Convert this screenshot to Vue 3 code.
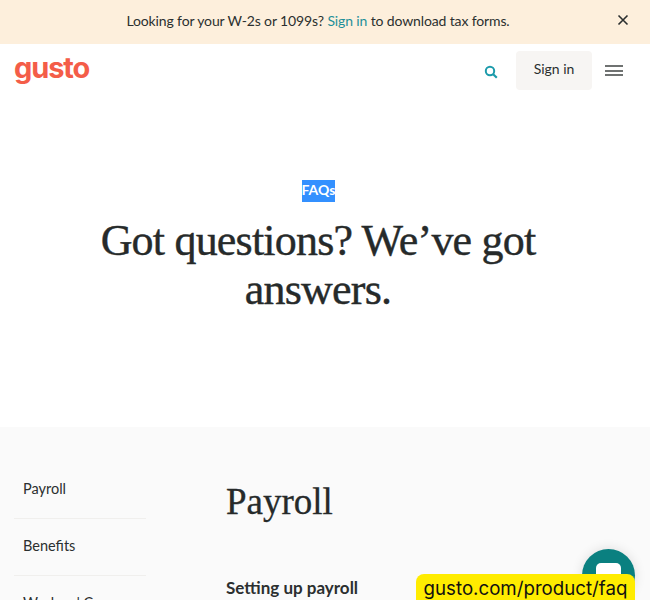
<template>
  <div class="page">
    <div class="banner">
      <p class="banner-text">Looking for your W-2s or 1099s? <a class="teal">Sign in</a> to download tax forms.</p>
      <svg class="close" width="12" height="12" viewBox="0 0 12 12">
        <path d="M1.5 1.5l9 9M10.5 1.5l-9 9" stroke="#2b2f2f" stroke-width="1.6" fill="none" />
      </svg>
    </div>

    <header class="nav">
      <div class="logo">gusto</div>
      <div class="nav-right">
        <svg class="search" width="14" height="14" viewBox="0 0 14 14">
          <circle cx="6" cy="6" r="4.2" stroke="#1c9bab" stroke-width="2" fill="none" />
          <path d="M9.2 9.2l3.6 3.6" stroke="#1c9bab" stroke-width="2.2" fill="none" />
        </svg>
        <button class="signin">Sign in</button>
        <div class="burger"><span></span><span></span><span></span></div>
      </div>
    </header>

    <section class="hero">
      <div class="eyebrow"><span>FAQs</span></div>
      <h1>Got questions? We’ve got answers.</h1>
    </section>

    <section class="content">
      <aside class="side">
        <a v-for="item in sideItems" :key="item" class="side-item">{{ item }}</a>
      </aside>
      <main class="main">
        <h2>Payroll</h2>
        <h3>Setting up payroll</h3>
      </main>
    </section>

    <div class="chat"><div class="bubble"></div></div>
    <div class="url">gusto.com/product/faq</div>
  </div>
</template>

<script setup>
const sideItems = ['Payroll', 'Benefits', "Workers' Comp"]
</script>

<style>
html, body { margin: 0; overflow: hidden; }
</style>

<style scoped>
.page {
  position: relative;
  width: 650px;
  height: 600px;
  overflow: hidden;
  background: #fff;
  font-family: "Lato", sans-serif;
  color: #2b2f2f;
}

.banner {
  height: 44px;
  background: #fdefdc;
  display: flex;
  align-items: center;
  justify-content: center;
  position: relative;
  box-sizing: border-box;
  padding: 0 14px 3px 0;
}
.banner-text { margin: 0; font-size: 14px; letter-spacing: -0.13px; }
.teal { color: #1f8f99; }
.close { position: absolute; right: 21px; top: 14px; }

.nav {
  height: 56px;
  display: flex;
  justify-content: space-between;
  align-items: flex-start;
  padding: 0 27px 0 14px;
}
.logo {
  font-family: "Inter", sans-serif;
  font-size: 29px;
  font-weight: 700;
  line-height: 44px;
  letter-spacing: -1.1px;
  color: #f45d48;
  margin-top: 2px;
}
.nav-right { display: flex; align-items: center; padding-top: 7px; }
.search { margin-right: 18px; margin-top: 2px; }
.signin {
  width: 76px;
  height: 39px;
  border: none;
  border-radius: 4px;
  background: #f7f5f3;
  font: 14px "Lato", sans-serif;
  color: #2b2f2f;
  padding: 0 0 4px;
}
.burger { display: flex; flex-direction: column; gap: 2.5px; margin-left: 13px; width: 18px; }
.burger span { height: 2px; background: #6f7271; }

.hero {
  height: 327px;
  box-sizing: border-box;
  padding: 79px 14px 0 0;
  text-align: center;
}
.eyebrow { height: 23px; }
.eyebrow span {
  display: inline-block;
  height: 22px;
  line-height: 20px;
  width: 33px;
  background: #3390ff;
  color: #fff;
  font-size: 14px;
  font-weight: 700;
  white-space: nowrap;
}
h1 {
  margin: 14px auto 0;
  width: 480px;
  font: 400 44px/49px "Liberation Serif", serif;
  letter-spacing: -0.8px;
  -webkit-text-stroke: 0.4px #262a2a;
  color: #262a2a;
}

.content {
  height: 173px;
  background: #fafafa;
  display: flex;
  padding: 36px 0 0 14px;
  overflow: hidden;
}
.side { width: 132px; flex: none; }
.side-item {
  display: block;
  height: 56px;
  padding: 16px 9px 0;
  box-sizing: border-box;
  margin-bottom: 1px;
  border-bottom: 1px solid #f0efed;
  font-size: 14.5px;
  line-height: 20px;
}
.main { margin-left: 80px; }
h2 {
  margin: 17px 0 0;
  font: 400 37px/44px "Liberation Serif", serif;
  -webkit-text-stroke: 0.3px #262a2a;
  color: #262a2a;
}
h3 { margin: 54px 0 0; font-size: 17px; font-weight: 700; line-height: 20px; }

.chat {
  position: absolute;
  left: 582px;
  top: 549px;
  width: 53px;
  height: 53px;
  border-radius: 50%;
  background: #0a8080;
  box-shadow: 0 0 12px rgba(0, 0, 0, 0.12);
}
.bubble {
  position: absolute;
  left: 14px;
  top: 14px;
  width: 25px;
  height: 24px;
  border-radius: 5px;
  background: #fff;
}
.url {
  position: absolute;
  left: 416px;
  top: 574px;
  width: 219px;
  height: 34px;
  border-radius: 8px;
  background: #ffec00;
  color: #111;
  font: 18.7px/30px "Inter", sans-serif;
  text-align: center;
}
</style>
